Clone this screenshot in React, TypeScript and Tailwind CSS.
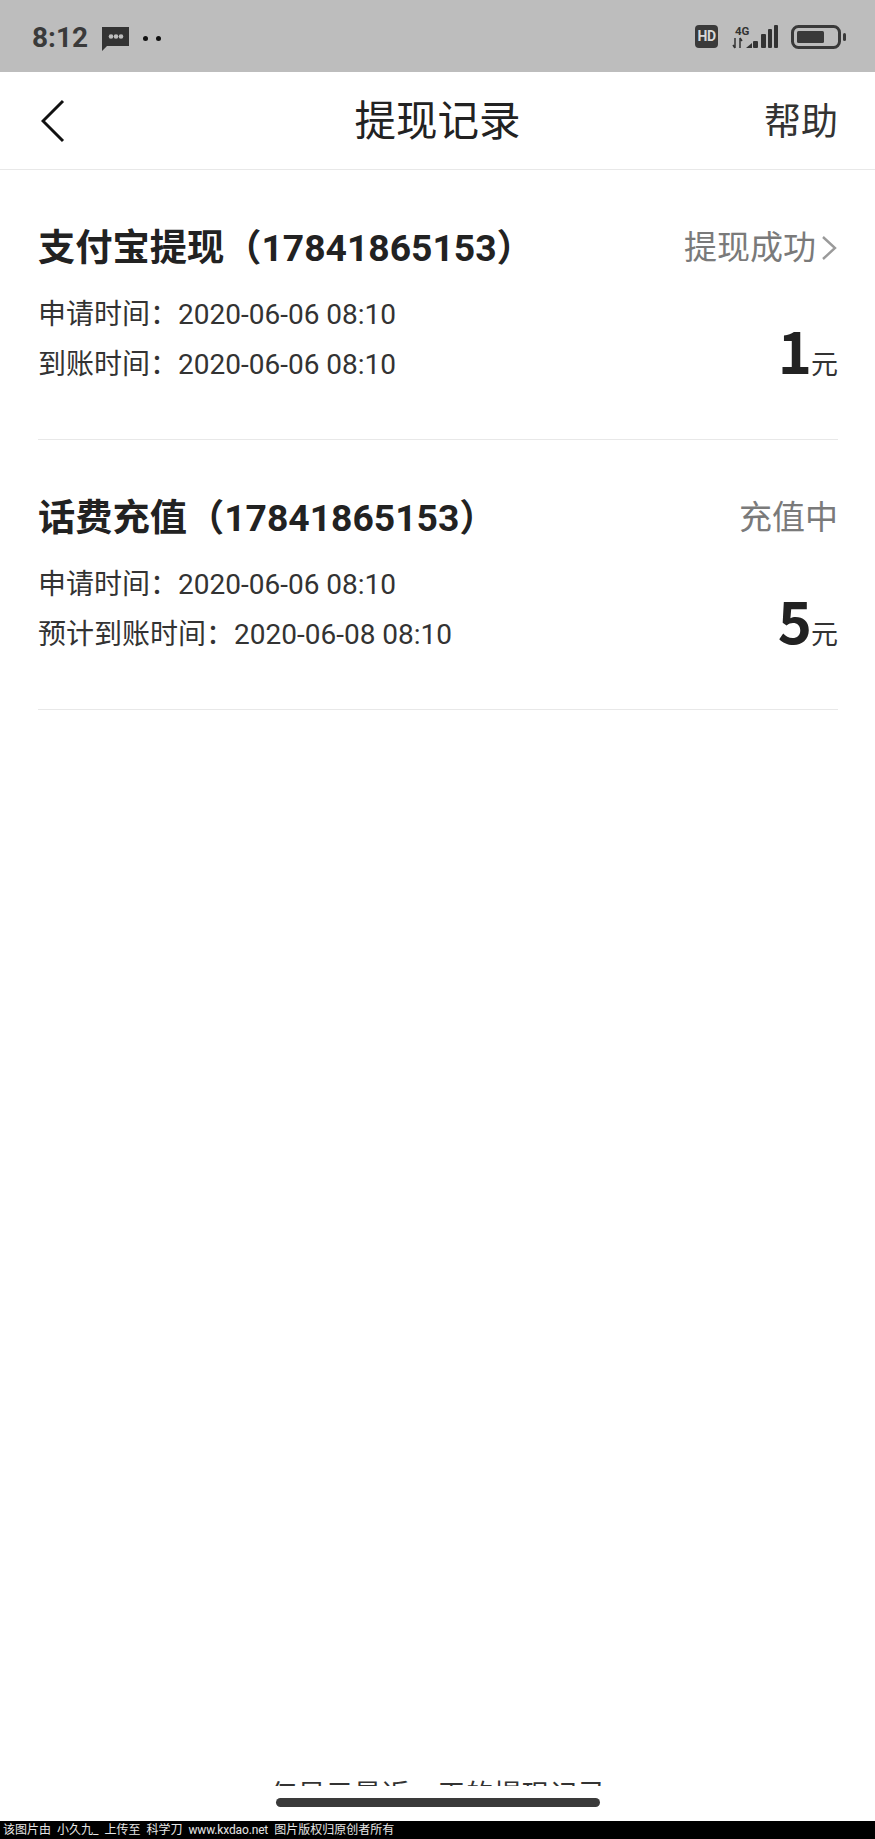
const font = "font-['Roboto','Noto_Sans_CJK_SC',sans-serif]";

interface RecordProps {
  title: string;
  status: string;
  showArrow?: boolean;
  lines: string[];
  amount: string;
}

function RecordRow({ title, status, showArrow, lines, amount }: RecordProps) {
  return (
    <div className="h-[270px] border-b border-[#e8e8e8] pt-[49px] box-border">
      <div className="flex items-center justify-between h-[58px]">
        <div className="text-[37.25px] leading-[58px] font-bold text-[#222222]">{title}</div>
        <div className="flex items-center text-[33px] text-[#7a7a7a]">
          {status}
          {showArrow && (
            <svg width="17" height="26" viewBox="0 0 17 26" fill="none" className="ml-[5px]">
              <path d="M2 2 L14 13 L2 24" stroke="#9a9a9a" strokeWidth="2.4" />
            </svg>
          )}
        </div>
      </div>
      <div className="flex items-end justify-between mt-[13px]">
        <div className="text-[28px] leading-[50px] text-[#333333]">
          {lines.map((line) => (
            <div key={line}>{line}</div>
          ))}
        </div>
        <div className="flex items-baseline text-[#222222] leading-[50px]">
          <span className="text-[58px] font-bold font-['Noto_Sans_CJK_SC',sans-serif] tracking-[-1px]">{amount}</span>
          <span className="text-[27px] text-[#333333]">元</span>
        </div>
      </div>
    </div>
  );
}

export default function App() {
  return (
    <div className={`w-[875px] h-[1839px] flex flex-col bg-white overflow-hidden ${font}`}>
      {/* Status bar */}
      <div className="h-[72px] bg-[#bdbdbd] flex items-center justify-between pl-[32px] pr-[29px] shrink-0">
        <div className="flex items-center pt-[4px]">
          <span className="text-[28px] font-bold text-[#3a3a3a]">8:12</span>
          <svg width="27" height="25" viewBox="0 0 27 25" className="ml-[14px]">
            <path d="M0 1 H27 V20 H5 L0 25 Z" fill="#333333" />
            <circle cx="9" cy="10.5" r="2.3" fill="#bdbdbd" />
            <circle cx="14" cy="10.5" r="2.3" fill="#bdbdbd" />
            <circle cx="19" cy="10.5" r="2.3" fill="#bdbdbd" />
          </svg>
          <div className="flex gap-[8px] ml-[14px]">
            <div className="w-[5px] h-[5px] rounded-full bg-[#111111]" />
            <div className="w-[5px] h-[5px] rounded-full bg-[#111111]" />
          </div>
        </div>
        <div className="flex items-center">
          <div className="w-[23px] h-[23px] rounded-[4px] bg-[#3a3a3a] text-[#d8d8d8] text-[14px] leading-[23px] font-bold text-center tracking-[-0.5px]">
            HD
          </div>
          <svg width="46" height="24" viewBox="0 0 46 24" className="ml-[14px] mt-[2px]">
            <text x="3" y="9.5" fontSize="11.5" fontWeight="700" fill="#333333" fontFamily="Roboto">4G</text>
            <path d="M3 13 V23 M1 20 L3 23 M8 23 V13 M8 13 L10 16" stroke="#333333" strokeWidth="1.5" fill="none" />
            <path d="M14 23 L20 18 V23 Z" fill="#333333" />
            <rect x="21" y="16" width="5" height="7" rx="1" fill="#333333" />
            <rect x="29" y="9" width="5" height="14" rx="1" fill="#333333" />
            <rect x="36" y="4" width="4" height="19" rx="1" fill="#333333" />
            <rect x="42" y="0" width="4" height="23" rx="1" fill="#333333" />
          </svg>
          <svg width="55" height="24" viewBox="0 0 55 24" className="ml-[13px] mt-[2px]">
            <rect x="1.5" y="1.5" width="47" height="21" rx="6" fill="none" stroke="#3a3a3a" strokeWidth="3" />
            <rect x="6" y="6" width="27" height="12" rx="1.5" fill="#3a3a3a" />
            <rect x="52" y="8" width="3" height="8" rx="1.5" fill="#3a3a3a" />
          </svg>
        </div>
      </div>

      {/* Nav */}
      <div className="relative h-[98px] border-b border-[#e8e8e8] flex items-center justify-between pl-[41px] pr-[37px] pt-[4px] shrink-0 box-border">
        <svg width="24" height="44" viewBox="0 0 24 44" fill="none" className="mb-[4px]">
          <path d="M22 2 L2 22 L22 42" stroke="#111111" strokeWidth="3" />
        </svg>
        <div className="absolute inset-x-0 text-center text-[41.5px] text-[#222222]">提现记录</div>
        <div className="text-[37px] text-[#333333]">帮助</div>
      </div>

      {/* Records */}
      <div className="flex-1 pl-[38px] pr-[37px]">
        <RecordRow
          title="支付宝提现（17841865153）"
          status="提现成功"
          showArrow
          lines={["申请时间：2020-06-06 08:10", "到账时间：2020-06-06 08:10"]}
          amount="1"
        />
        <RecordRow
          title="话费充值（17841865153）"
          status="充值中"
          lines={["申请时间：2020-06-06 08:10", "预计到账时间：2020-06-08 08:10"]}
          amount="5"
        />
      </div>

      {/* Clipped footer note and home bar */}
      <div className="h-[6px] overflow-hidden text-center text-[28px] leading-[32px] text-[#333333] shrink-0">
        仅显示最近一天的提现记录
      </div>
      <div className="h-[35px] flex justify-center pt-[12px] shrink-0">
        <div className="w-[324px] h-[9px] rounded-full bg-[#3a3a3a]" />
      </div>

      {/* Watermark */}
      <div className="h-[18px] bg-black text-[#e6e6e6] text-[12px] leading-[18px] pl-[3px] flex gap-[6px] whitespace-nowrap shrink-0">
        <span>该图片由</span>
        <span>小久九_</span>
        <span>上传至</span>
        <span>科学刀</span>
        <span className="tracking-[-0.15px]">www.kxdao.net</span>
        <span>图片版权归原创者所有</span>
      </div>
    </div>
  );
}
